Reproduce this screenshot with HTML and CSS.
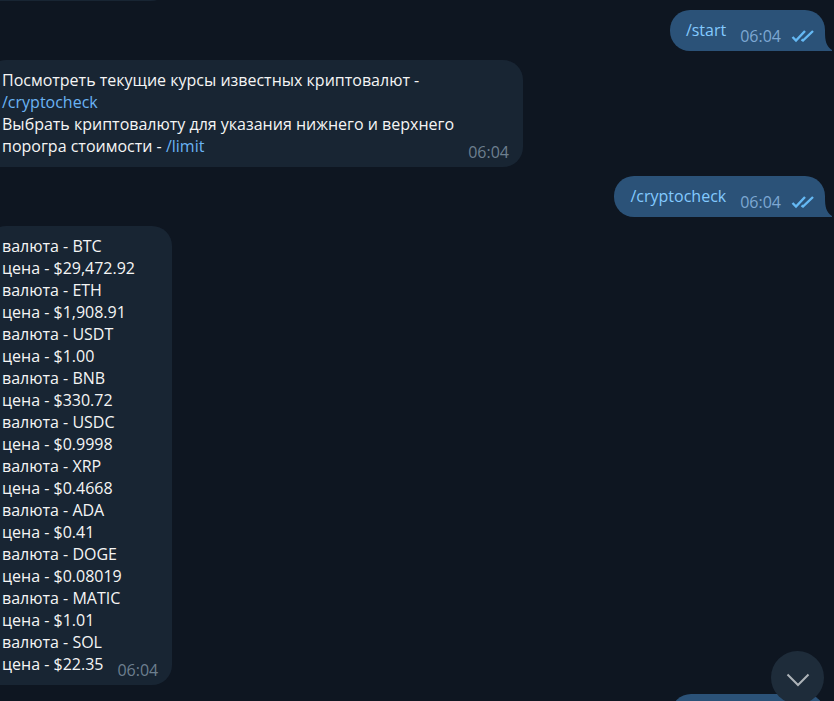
FILE: index.html
```html
<!DOCTYPE html>
<html lang="ru">
<head>
<meta charset="utf-8">
<meta name="viewport" content="width=device-width, initial-scale=1">
<title>Чат</title>
<link rel="stylesheet" href="styles.css">
</head>
<body>
<svg class="sprite" aria-hidden="true">
  <symbol id="checks" viewBox="0 0 24 14"><path d="M1.5 8 5 11.5 14 2M10.5 10.5 12 11.5 22 2"/></symbol>
  <symbol id="tail" viewBox="0 0 7 20"><path d="M0 0C0 10 1 15 7 19V20H0Z"/></symbol>
</svg>
<main class="chat">
  <div class="message in partial-top"></div>
  <article class="message out">
    <p class="text"><a href="#">/start</a></p>
    <footer class="meta"><time>06:04</time><svg class="checks" aria-hidden="true"><use href="#checks"/></svg></footer>
    <svg class="tail" aria-hidden="true"><use href="#tail"/></svg>
  </article>
  <article class="message in wrapped">
    <p class="text">Посмотреть текущие курсы известных криптовалют - <a href="#">/cryptocheck</a><br>Выбрать криптовалюту для указания нижнего и верхнего порогра стоимости - <a href="#">/limit</a></p>
    <footer class="meta"><time>06:04</time></footer>
  </article>
  <article class="message out">
    <p class="text"><a href="#">/cryptocheck</a></p>
    <footer class="meta"><time>06:04</time><svg class="checks" aria-hidden="true"><use href="#checks"/></svg></footer>
    <svg class="tail" aria-hidden="true"><use href="#tail"/></svg>
  </article>
  <article class="message in">
    <p class="text">валюта - BTC<br>цена - $29,472.92<br>валюта - ETH<br>цена - $1,908.91<br>валюта - USDT<br>цена - $1.00<br>валюта - BNB<br>цена - $330.72<br>валюта - USDC<br>цена - $0.9998<br>валюта - XRP<br>цена - $0.4668<br>валюта - ADA<br>цена - $0.41<br>валюта - DOGE<br>цена - $0.08019<br>валюта - MATIC<br>цена - $1.01<br>валюта - SOL<br><span class="last-line">цена - $22.35<time class="inline-time">06:04</time></span></p>
  </article>
  <div class="message out partial-bottom"></div>
</main>
<button class="scroll-down" type="button" aria-label="Вниз"><svg viewBox="0 0 24 14" aria-hidden="true"><path d="M1.5 1.5 12 12 22.5 1.5"/></svg></button>
</body>
</html>
```
FILE: styles.css
```css
* {
  box-sizing: border-box;
}

body {
  margin: 0;
  height: 100vh;
  overflow: hidden;
  background: #0e1621;
  color: #f5f5f5;
  font: 16px/22px "Open Sans", "Noto Sans", sans-serif;
}

.sprite {
  position: absolute;
  width: 0;
  height: 0;
}

.chat {
  display: flex;
  flex-direction: column;
  gap: 9px;
  /* the list is scrolled: its first bubble ends at the window's top edge */
  margin: -40px 9px 0 -14px;
}

.message {
  position: relative;
  display: flex;
  flex: none;
  align-items: flex-end;
  gap: 14px;
  max-width: 537px;
  min-height: 41px;
  padding: 9px 14px 10px 16px;
  border-radius: 20px;
}

.in {
  align-self: flex-start;
  background: #182533;
  border-bottom-left-radius: 0;
}

.out {
  align-self: flex-end;
  background: #2b5278;
  padding-right: 10px;
  border-bottom-right-radius: 0;
}

.text {
  margin: 0;
}

a {
  color: #6ab3f3;
  text-decoration: none;
}

.out a {
  color: #83caff;
}

.meta {
  display: flex;
  align-items: center;
  gap: 10px;
  margin-bottom: -6px;
  color: #6d7f8f;
}

.out .meta {
  color: #7da8d3;
}

/* lines run the full width of the bubble, the time sits beside the last one */
.wrapped {
  gap: 0;
}

.wrapped .text {
  flex: 1 0 100%;
}

.wrapped .meta {
  flex: none;
  margin-left: -41px;
}

.last-line {
  display: flex;
  gap: 14px;
}

.inline-time {
  margin: 6px 0 -6px;
  color: #6d7f8f;
}

.checks {
  width: 24px;
  height: 14px;
  fill: none;
  stroke: #65b9f4;
  stroke-width: 2.4;
}

.tail {
  position: absolute;
  left: 100%;
  bottom: 0;
  width: 7px;
  height: 20px;
  fill: #2b5278;
}

.partial-top {
  width: 185px;
}

.partial-bottom {
  width: 154px;
}

.scroll-down {
  position: fixed;
  right: 10px;
  bottom: -3px;
  display: grid;
  place-items: center;
  width: 53px;
  height: 53px;
  padding: 5px 0 0;
  border: 0;
  border-radius: 50%;
  background: #1e2c3a;
}

.scroll-down svg {
  width: 24px;
  height: 14px;
  fill: none;
  stroke: #adb3b8;
  stroke-width: 2;
}
```
